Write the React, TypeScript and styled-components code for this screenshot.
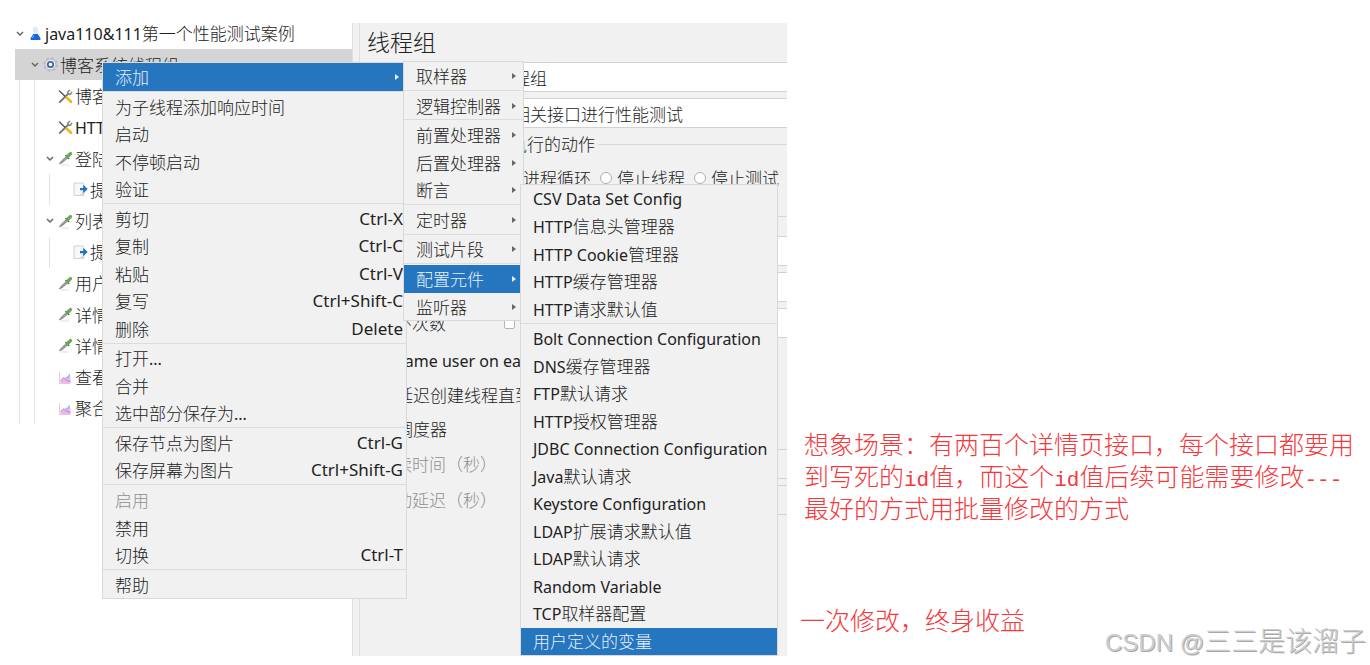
import React from "react";
import styled, { createGlobalStyle, css } from "styled-components";

const GlobalStyle = createGlobalStyle`
  *, *::before, *::after { box-sizing: border-box; }
  body {
    margin: 0;
    background: #fff;
    color: #222;
    font-family: "Noto Sans CJK SC", "Noto Sans", sans-serif;
    font-size: 17px;
    font-weight: 300;
    line-height: 24px;
  }
  ul { list-style: none; margin: 0; padding: 0; }
  button, input { font: inherit; color: inherit; }
`;

/* ---------- text ---------- */

const Latin = styled.span`
  font-family: "Noto Sans", sans-serif;
  font-size: 16px;
  font-weight: 400;
`;

const Shortcut = styled(Latin)`
  font-size: 17px;
`;

const Mixed = ({ text }: { text: string }) => (
  <span>
    {text
      .split(/([\x20-\x7e]+)/)
      .filter(Boolean)
      .map((run, i) => (/^[\x20-\x7e]/.test(run) ? <Latin key={i}>{run}</Latin> : run))}
  </span>
);

/* ---------- page ---------- */

const Page = styled.main`
  display: grid;
  grid-template-columns: 352px minmax(0, 435fr) minmax(0, 583fr);
  min-height: 100vh;
  padding-bottom: 9px;
  overflow: hidden;
`;

/* ---------- icons ---------- */

const Icon = styled.svg`
  flex: none;
  width: 15px;
  height: 15px;
  margin: 0 2px 0 4px;
  overflow: visible;
`;

const FlaskIcon = () => (
  <Icon viewBox="0 0 15 15">
    <path d="M6 1h3v5.500l3.500 6q.3 1.500-1 1.500h-8q-1.300 0-1-1.500l3.500-6z" fill="#e6eef8" />
    <path d="M6 1v5M9 1v5" stroke="#c3d3e6" strokeWidth="0.800" />
    <path d="M5.200 8h4.600l2.700 4.500q.3 1.500-1 1.500h-8q-1.300 0-1-1.500z" fill="#1668d8" />
    <path d="M5.900 9l-1.500 3" stroke="#7fb2f5" strokeWidth="1" />
  </Icon>
);

const GearIcon = () => (
  <Icon viewBox="0 0 15 15">
    <circle cx="7.500" cy="7.500" r="6.400" fill="none" stroke="#b4b9c2" strokeWidth="1.600" strokeDasharray="2.700 2.300" />
    <circle cx="7.500" cy="7.500" r="5.300" fill="#e6e9ef" stroke="#b7bec9" strokeWidth="1" />
    <circle cx="7.500" cy="7.500" r="2.700" fill="#fff" stroke="#46669f" strokeWidth="1.800" />
  </Icon>
);

const ToolsIcon = () => (
  <Icon viewBox="0 0 15 15">
    <path d="M1.800 13L10.500 4.500" stroke="#777" strokeWidth="1.800" strokeLinecap="round" />
    <path d="M9.700 4.700q-.5-2.400 2-3.400M10.500 5.400q2.500.3 3.200-2.200" fill="none" stroke="#888" strokeWidth="1.400" strokeLinecap="round" />
    <path d="M1.500 2l6 5.800" stroke="#555" strokeWidth="1.400" strokeLinecap="round" />
    <path d="M8.500 8.600l4.500 4.200" stroke="#e9b721" strokeWidth="2.800" strokeLinecap="round" />
  </Icon>
);

const DropperIcon = () => (
  <Icon viewBox="0 0 15 15">
    <path d="M3 14h8" stroke="#e3e3e3" strokeWidth="1.200" />
    <path d="M1.300 13l2-3 5-4.500 1.500 1.500-5.500 4.700z" fill="#9c9c9c" stroke="#777" strokeWidth="0.600" />
    <path d="M7.800 4.400l3 3" stroke="#446d40" strokeWidth="1.400" strokeLinecap="round" />
    <path d="M9.800 5.300l2.700-2.700" stroke="#68a857" strokeWidth="3.400" strokeLinecap="round" />
  </Icon>
);

const ExtractIcon = () => (
  <Icon viewBox="0 0 15 15">
    <path d="M1 1h9l1 2v10.500H1z" fill="#f7f8fa" stroke="#ccd0d5" strokeWidth="1" />
    <path d="M6 13.500l5-5v5z" fill="#d9dde2" />
    <path d="M7 6h3.200V2.800L14.700 7l-4.500 4.200V8.300H7z" fill="#1e72cd" />
  </Icon>
);

const ChartIcon = () => (
  <Icon viewBox="0 0 15 15">
    <path d="M1.500 2v11.500h11" fill="none" stroke="#d2d2d8" strokeWidth="1" />
    <path d="M2.500 10.500l3-2.700 2.500 2 4.500-2V13h-10z" fill="#f2b3ee" />
    <path d="M2.500 10.500l3-2.700 2.500 2.200 4.500 1.500" fill="none" stroke="#d975cf" strokeWidth="1" />
    <path d="M6.500 7.500l2.500-.8 3-3.200v4.500l-3.500 1.500z" fill="#a3bcf3" />
  </Icon>
);

const icons = {
  flask: FlaskIcon,
  gear: GearIcon,
  tools: ToolsIcon,
  dropper: DropperIcon,
  extract: ExtractIcon,
  chart: ChartIcon,
};

/* ---------- tree ---------- */

const Tree = styled.ul`
  display: flex;
  flex-direction: column;
  align-self: start;
  min-height: 406px;
  && { margin: 18px 0 0 15px; }
`;

const TreeRow = styled.li<{ $selected?: boolean }>`
  position: relative;
  flex: 1 0 31px;
  display: flex;
  align-items: center;
  white-space: nowrap;
  background: ${(p) => (p.$selected ? "#d4d4d4" : "transparent")};
  z-index: ${(p) => (p.$selected ? 2 : 0)};
`;

const Guide = styled.span<{ $visible: boolean }>`
  flex: 0 0 15px;
  align-self: stretch;
  padding-left: 4px;
  &::before {
    content: "";
    display: block;
    width: 1px;
    height: 100%;
    background: ${(p) => (p.$visible ? "#e2e2e2" : "transparent")};
  }
`;

const Toggle = styled.button`
  flex: 0 0 9px;
  display: flex;
  justify-content: center;
  height: 20px;
  align-items: center;
  padding: 0;
  border: 0;
  background: none;
`;

const ToggleSpace = styled.span`
  flex: 0 0 9px;
`;

const Chevron = () => (
  <svg width="8" height="6" viewBox="0 0 8 6" aria-hidden="true">
    <path d="M1 1l3 3 3-3" fill="none" stroke="#666" strokeWidth="1.500" />
  </svg>
);

type Node = { text: string; icon: keyof typeof icons; depth: number; open?: boolean; selected?: boolean };

const nodes: Node[] = [
  { text: "java110&111第一个性能测试案例", icon: "flask", depth: 0, open: true },
  { text: "博客系统线程组", icon: "gear", depth: 1, open: true, selected: true },
  { text: "博客", icon: "tools", depth: 2 },
  { text: "HTTP", icon: "tools", depth: 2 },
  { text: "登陆", icon: "dropper", depth: 2, open: true },
  { text: "提", icon: "extract", depth: 3 },
  { text: "列表", icon: "dropper", depth: 2, open: true },
  { text: "提", icon: "extract", depth: 3 },
  { text: "用户", icon: "dropper", depth: 2 },
  { text: "详情", icon: "dropper", depth: 2 },
  { text: "详情", icon: "dropper", depth: 2 },
  { text: "查看", icon: "chart", depth: 2 },
  { text: "聚合", icon: "chart", depth: 2 },
];

/* ---------- menus ---------- */

const MenuBox = styled.ul<{ $left: number; $top: number; $width: number; $height: number }>`
  position: absolute;
  z-index: 3;
  left: ${(p) => p.$left}px;
  top: ${(p) => p.$top}px;
  width: ${(p) => p.$width}px;
  min-height: ${(p) => p.$height}px;
  display: flex;
  flex-direction: column;
  border: 1px solid #d9d9d9;
  background: #f1f1f1;
  color: #222;
`;

const MenuRow = styled.li`
  position: relative;
  flex: 1 0 27px;
  display: flex;
`;

const MenuRule = styled.li`
  flex: 0 0 2px;
  border-top: 1px solid #dcdcdc;
`;

const MenuButton = styled.button<{ $active?: boolean; $arrow?: boolean }>`
  flex: 1;
  display: flex;
  align-items: center;
  justify-content: space-between;
  padding: 0 ${(p) => (p.$arrow ? 7 : 3)}px 0 12px;
  border: 0;
  background: transparent;
  text-align: left;
  white-space: nowrap;
  &:disabled { color: #8f8f8f; }
  ${(p) =>
    p.$active &&
    css`
      background: #2675bf;
      color: #e6f0fa;
    `}
`;

const Arrow = ({ light }: { light?: boolean }) => (
  <svg width="4" height="6" viewBox="0 0 4 6" aria-hidden="true">
    <path d="M0 0l4 3-4 3z" fill={light ? "#e6f0fa" : "#666"} />
  </svg>
);

type Item = {
  text: string;
  keys?: string;
  arrow?: boolean;
  active?: boolean;
  disabled?: boolean;
  child?: React.ReactNode;
};

type MenuProps = { groups: Item[][]; left: number; top: number; width: number; height: number };

const Menu = ({ groups, left, top, width, height }: MenuProps) => (
  <MenuBox $left={left} $top={top} $width={width} $height={height}>
    {groups.map((group, g) => (
      <React.Fragment key={g}>
        {g > 0 && <MenuRule role="separator" />}
        {group.map((item) => (
          <MenuRow key={item.text}>
            <MenuButton type="button" $active={item.active} $arrow={item.arrow} disabled={item.disabled}>
              <Mixed text={item.text} />
              {item.keys && <Shortcut>{item.keys}</Shortcut>}
              {item.arrow && <Arrow light={item.active} />}
            </MenuButton>
            {item.child}
          </MenuRow>
        ))}
      </React.Fragment>
    ))}
  </MenuBox>
);

const configGroups: Item[][] = [
  [
    { text: "CSV Data Set Config" },
    { text: "HTTP信息头管理器" },
    { text: "HTTP Cookie管理器" },
    { text: "HTTP缓存管理器" },
    { text: "HTTP请求默认值" },
  ],
  [
    { text: "Bolt Connection Configuration" },
    { text: "DNS缓存管理器" },
    { text: "FTP默认请求" },
    { text: "HTTP授权管理器" },
    { text: "JDBC Connection Configuration" },
    { text: "Java默认请求" },
    { text: "Keystore Configuration" },
    { text: "LDAP扩展请求默认值" },
    { text: "LDAP默认请求" },
    { text: "Random Variable" },
    { text: "TCP取样器配置" },
    { text: "用户定义的变量", active: true },
  ],
];

const addGroups: Item[][] = [
  [{ text: "取样器", arrow: true }],
  [{ text: "逻辑控制器", arrow: true }],
  [
    { text: "前置处理器", arrow: true },
    { text: "后置处理器", arrow: true },
    { text: "断言", arrow: true },
  ],
  [{ text: "定时器", arrow: true }],
  [{ text: "测试片段", arrow: true }],
  [
    {
      text: "配置元件",
      arrow: true,
      active: true,
      child: <Menu groups={configGroups} left={116} top={-81} width={258} height={472} />,
    },
    { text: "监听器", arrow: true },
  ],
];

const contextGroups: Item[][] = [
  [
    {
      text: "添加",
      arrow: true,
      active: true,
      child: <Menu groups={addGroups} left={300} top={-2} width={121} height={260} />,
    },
  ],
  [{ text: "为子线程添加响应时间" }, { text: "启动" }, { text: "不停顿启动" }, { text: "验证" }],
  [
    { text: "剪切", keys: "Ctrl-X" },
    { text: "复制", keys: "Ctrl-C" },
    { text: "粘贴", keys: "Ctrl-V" },
    { text: "复写", keys: "Ctrl+Shift-C" },
    { text: "删除", keys: "Delete" },
  ],
  [{ text: "打开..." }, { text: "合并" }, { text: "选中部分保存为..." }],
  [
    { text: "保存节点为图片", keys: "Ctrl-G" },
    { text: "保存屏幕为图片", keys: "Ctrl+Shift-G" },
  ],
  [{ text: "启用", disabled: true }, { text: "禁用" }, { text: "切换", keys: "Ctrl-T" }],
  [{ text: "帮助" }],
];

/* ---------- thread group form ---------- */

const Detail = styled.section`
  display: flex;
  margin-top: 23px;
  overflow: hidden;
  background: #f1f1f1;
`;

const Splitter = styled.div`
  flex: 0 0 8px;
  border: solid #dedede;
  border-width: 0 1px;
`;

const Form = styled.form`
  flex: 1 0 640px;
  padding-left: 7px;
  white-space: nowrap;
`;

const Title = styled.h1`
  margin: 0;
  padding-bottom: 3px;
  font-size: 23px;
  font-weight: 300;
  line-height: 36px;
`;

const Field = styled.div`
  display: flex;
  align-items: center;
  margin-bottom: 6px;
`;

const FieldLabel = styled.label<{ $width: number; $muted?: boolean }>`
  flex: 0 0 ${(p) => p.$width}px;
  color: ${(p) => (p.$muted ? "#8f8f8f" : "inherit")};
`;

const TextInput = styled.input`
  flex: 1;
  min-width: 0;
  height: 30px;
  padding: 0 4px;
  border: 1px solid #d2d2d2;
  background: #fff;
  &:disabled { background: #f1f1f1; }
`;

const Group = styled.fieldset`
  margin: 0 0 4px;
  padding: 0 0 0 11px;
  border: 0 solid #d9d9d9;
  border-top-width: 1px;
`;

const Legend = styled.legend`
  margin-left: -6px;
  padding: 0 3px 0 2px;
  line-height: 20px;
`;

const ActionRow = styled.div`
  display: flex;
  align-items: center;
  gap: 9px;
  height: 48px;
`;

const Choice = styled.label`
  display: flex;
  align-items: center;
  gap: 5px;
`;

const Radio = styled.input`
  appearance: none;
  width: 12px;
  height: 12px;
  margin: 0;
  border: 1px solid #b0b0b0;
  border-radius: 50%;
  background: #fff;
`;

const Check = styled.input`
  appearance: none;
  width: 11px;
  height: 11px;
  margin: 0;
  border: 1px solid #b5b5b5;
  border-radius: 2px;
  background: #fff;
`;

const CheckLine = styled.div`
  height: 34px;
  padding-left: 2px;
  display: flex;
  align-items: center;
`;

const Properties = styled.div`
  padding-top: 10px;
`;

const Schedule = styled.div`
  padding-top: 3px;
`;

/* ---------- annotations ---------- */

const Notes = styled.aside`
  display: flex;
  flex-direction: column;
  justify-content: flex-end;
  color: #f5383c;
  font-size: 25px;
  line-height: 32px;
  white-space: nowrap;
`;

const Note = styled.p`
  margin: 0 0 80px;
  padding-left: 17px;
`;

const ClosingNote = styled.p`
  margin: 0;
  padding-left: 13px;
`;

const Mono = styled.span`
  font-family: "Liberation Mono", monospace;
  font-size: 21px;
  line-height: 20px;
`;

const Watermark = styled.p`
  align-self: flex-end;
  margin: -11px 4px -3px;
  font-size: 27px;
  color: #cdcdcd;
  text-shadow: 1px 1px 0 #a8a8a8;
`;

const WatermarkLatin = styled.span`
  font-family: "Liberation Sans", sans-serif;
  font-size: 24px;
`;

export default function App() {
  return (
    <>
      <GlobalStyle />
      <Page>
        <Tree>
          {nodes.map((n, i) => {
            const Glyph = icons[n.icon];
            return (
              <TreeRow key={i} $selected={n.selected}>
                {Array.from({ length: n.depth }, (_, d) => (
                  <Guide key={d} $visible={!n.selected} />
                ))}
                {n.open ? (
                  <Toggle type="button" aria-label="折叠">
                    <Chevron />
                  </Toggle>
                ) : (
                  <ToggleSpace />
                )}
                <Glyph />
                <Mixed text={n.text} />
                {n.selected && <Menu groups={contextGroups} left={87} top={13} width={305} height={537} />}
              </TreeRow>
            );
          })}
        </Tree>

        <Detail>
          <Splitter />
          <Form>
            <Title>线程组</Title>
            <Field>
              <FieldLabel htmlFor="name" $width={56}>名称：</FieldLabel>
              <TextInput id="name" defaultValue="博客系统线程组" />
            </Field>
            <Field>
              <FieldLabel htmlFor="comment" $width={56}>注释：</FieldLabel>
              <TextInput id="comment" defaultValue="对博客系统相关接口进行性能测试" />
            </Field>
            <Group>
              <Legend>在取样器错误后要执行的动作</Legend>
              <ActionRow>
                <Choice><Radio type="radio" name="action" />继续</Choice>
                <Choice><Radio type="radio" name="action" />启动下一进程循环</Choice>
                <Choice><Radio type="radio" name="action" />停止线程</Choice>
                <Choice><Radio type="radio" name="action" />停止测试</Choice>
              </ActionRow>
            </Group>
            <Group>
              <Legend>线程属性</Legend>
              <Properties>
                <Field>
                  <FieldLabel htmlFor="threads" $width={160}>线程数：</FieldLabel>
                  <TextInput id="threads" />
                </Field>
                <Field>
                  <FieldLabel htmlFor="ramp" $width={160}><Mixed text="Ramp-Up时间（秒）：" /></FieldLabel>
                  <TextInput id="ramp" />
                </Field>
                <Field>
                  <FieldLabel htmlFor="loops" $width={126}>循环次数</FieldLabel>
                  <Choice><Check type="checkbox" />永远</Choice>
                  <TextInput id="loops" />
                </Field>
                <CheckLine>
                  <Choice><Check type="checkbox" /><Latin>Same user on each iteration</Latin></Choice>
                </CheckLine>
                <CheckLine>
                  <Choice><Check type="checkbox" />延迟创建线程直到需要</Choice>
                </CheckLine>
                <CheckLine>
                  <Choice><Check type="checkbox" />调度器</Choice>
                </CheckLine>
                <Schedule>
                  <Field>
                    <FieldLabel htmlFor="duration" $width={160} $muted>持续时间（秒）</FieldLabel>
                    <TextInput id="duration" disabled />
                  </Field>
                  <Field>
                    <FieldLabel htmlFor="delay" $width={160} $muted>启动延迟（秒）</FieldLabel>
                    <TextInput id="delay" disabled />
                  </Field>
                </Schedule>
              </Properties>
            </Group>
          </Form>
        </Detail>

        <Notes>
          <Note>
            想象场景：有两百个详情页接口，每个接口都要用
            <br />
            到写死的<Mono>id</Mono>值，而这个<Mono>id</Mono>值后续可能需要修改<Mono>---</Mono>
            <br />
            最好的方式用批量修改的方式
          </Note>
          <ClosingNote>一次修改，终身收益</ClosingNote>
          <Watermark>
            <WatermarkLatin>CSDN @</WatermarkLatin>三三是该溜子
          </Watermark>
        </Notes>
      </Page>
    </>
  );
}
